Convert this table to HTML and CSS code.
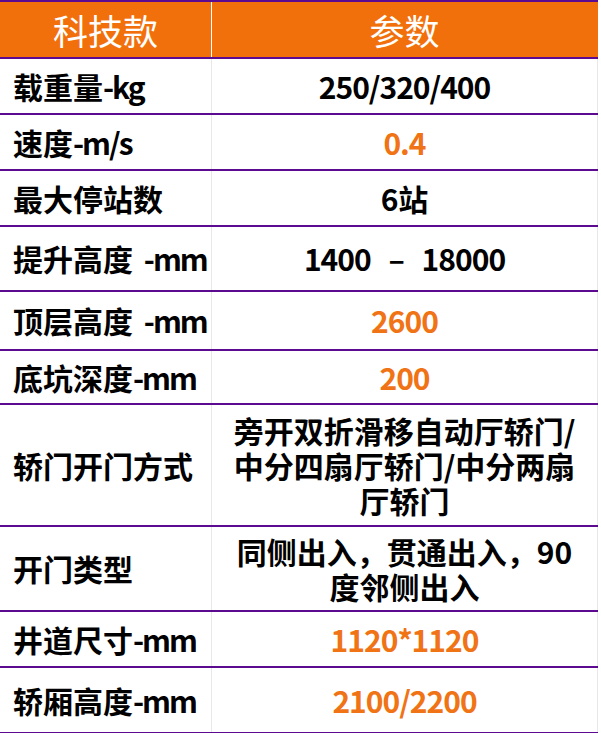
FILE: index.html
```html
<!DOCTYPE html>
<html lang="zh-CN">
<head>
<meta charset="utf-8">
<title>科技款 参数</title>
<link rel="stylesheet" href="styles.css">
</head>
<body>
<div class="spec">
  <div class="row head h55"><div class="c k">科技款</div><div class="c v">参数</div></div>
  <div class="row h54"><div class="c k">载重量<span class="unit">-kg</span></div><div class="c v num">250/320/400</div></div>
  <div class="row h54"><div class="c k">速度<span class="unit">-m/s</span></div><div class="c v hl num">0.4</div></div>
  <div class="row h54"><div class="c k">最大停站数</div><div class="c v">6站</div></div>
  <div class="row h63"><div class="c k">提升高度<span class="unit gap"> -mm</span></div><div class="c v num wide">1400 – 18000</div></div>
  <div class="row h57"><div class="c k">顶层高度<span class="unit gap"> -mm</span></div><div class="c v hl num">2600</div></div>
  <div class="row h52"><div class="c k">底坑深度<span class="unit">-mm</span></div><div class="c v hl num">200</div></div>
  <div class="row h120"><div class="c k">轿门开门方式</div><div class="c v">旁开双折滑移自动厅轿门/中分四扇厅轿门/中分两扇厅轿门</div></div>
  <div class="row h83"><div class="c k">开门类型</div><div class="c v">同侧出入，贯通出入，90度邻侧出入</div></div>
  <div class="row h54"><div class="c k">井道尺寸<span class="unit">-mm</span></div><div class="c v hl num">1120*1120</div></div>
  <div class="row h64"><div class="c k">轿厢高度<span class="unit">-mm</span></div><div class="c v hl num">2100/2200</div></div>
</div>
</body>
</html>
```
FILE: styles.css
```css
html, body {
  margin: 0;
  padding: 0;
  background: #ffffff;
}

body {
  font-family: "Noto Sans CJK SC", "Noto Sans", sans-serif;
  color: #000000;
}

.spec {
  width: 598px;
  border-top: 2px solid #5c0a8f;
}

.row {
  display: grid;
  grid-template-columns: 212px 1fr;
  border-bottom: 2px solid #5c0a8f;
}

.h52 { height: 52px; }
.h54 { height: 54px; }
.h55 { height: 55px; }
.h57 { height: 57px; }
.h63 { height: 63px; }
.h64 { height: 64px; }
.h83 { height: 83px; }
.h120 { height: 120px; }

.c {
  display: flex;
  align-items: center;
  font-size: 30px;
  font-weight: 700;
  line-height: 35px;
}

.k {
  padding-left: 13px;
  border-right: 1px solid #e8e8e8;
  white-space: nowrap;
}

.unit {
  letter-spacing: -2px;
  white-space: pre;
}

.unit.gap {
  word-spacing: 6px;
}

.v {
  justify-content: center;
  text-align: center;
  padding: 0 14px;
  border-right: 1px solid #e8e8e8;
}

.num {
  letter-spacing: -1px;
  font-weight: 600;
}

.hl {
  color: #f07315;
}

.wide {
  word-spacing: 12px;
}

.head {
  background: #f2700c;
}

.head .c {
  color: #ffffff;
  font-weight: 400;
  font-size: 35px;
  letter-spacing: 0;
  justify-content: center;
  padding: 0;
}

.head .k {
  border-right-color: #ffffff;
}

.head .v {
  border-right-color: #f2700c;
}
```
